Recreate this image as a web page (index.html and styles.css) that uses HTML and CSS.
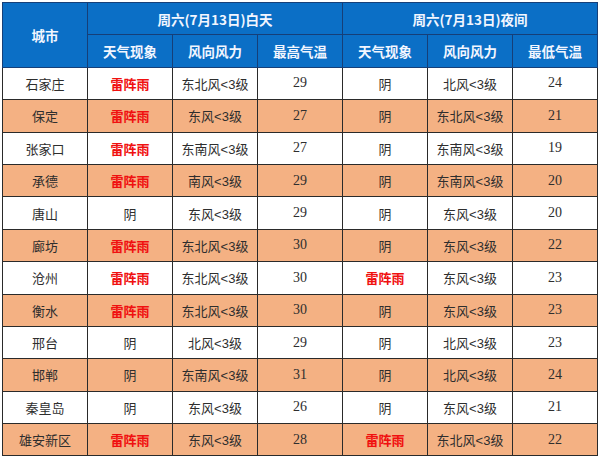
FILE: index.html
```html
<!DOCTYPE html>
<html lang="zh-CN">
<head>
<meta charset="utf-8">
<title>天气预报</title>
<link rel="stylesheet" href="styles.css">
</head>
<body>
<table class="wx">
  <colgroup>
    <col class="c1"><col class="c2"><col class="c3"><col class="c4"><col class="c5"><col class="c6"><col class="c7">
  </colgroup>
  <thead>
    <tr>
      <th rowspan="2">城市</th>
      <th colspan="3">周六(7月13日)白天</th>
      <th colspan="3">周六(7月13日)夜间</th>
    </tr>
    <tr>
      <th>天气现象</th><th>风向风力</th><th>最高气温</th>
      <th>天气现象</th><th>风向风力</th><th>最低气温</th>
    </tr>
  </thead>
  <tbody>
    <tr><td>石家庄</td><td class="red">雷阵雨</td><td>东北风&lt;3级</td><td class="num">29</td><td>阴</td><td>北风&lt;3级</td><td class="num">24</td></tr>
    <tr class="alt"><td>保定</td><td class="red">雷阵雨</td><td>东风&lt;3级</td><td class="num">27</td><td>阴</td><td>东北风&lt;3级</td><td class="num">21</td></tr>
    <tr><td>张家口</td><td class="red">雷阵雨</td><td>东南风&lt;3级</td><td class="num">27</td><td>阴</td><td>东南风&lt;3级</td><td class="num">19</td></tr>
    <tr class="alt"><td>承德</td><td class="red">雷阵雨</td><td>南风&lt;3级</td><td class="num">29</td><td>阴</td><td>东南风&lt;3级</td><td class="num">20</td></tr>
    <tr><td>唐山</td><td>阴</td><td>东风&lt;3级</td><td class="num">29</td><td>阴</td><td>东风&lt;3级</td><td class="num">20</td></tr>
    <tr class="alt"><td>廊坊</td><td class="red">雷阵雨</td><td>东北风&lt;3级</td><td class="num">30</td><td>阴</td><td>东风&lt;3级</td><td class="num">22</td></tr>
    <tr><td>沧州</td><td class="red">雷阵雨</td><td>东北风&lt;3级</td><td class="num">30</td><td class="red">雷阵雨</td><td>东风&lt;3级</td><td class="num">23</td></tr>
    <tr class="alt"><td>衡水</td><td class="red">雷阵雨</td><td>东北风&lt;3级</td><td class="num">30</td><td>阴</td><td>东风&lt;3级</td><td class="num">23</td></tr>
    <tr><td>邢台</td><td>阴</td><td>北风&lt;3级</td><td class="num">29</td><td>阴</td><td>北风&lt;3级</td><td class="num">23</td></tr>
    <tr class="alt"><td>邯郸</td><td>阴</td><td>东南风&lt;3级</td><td class="num">31</td><td>阴</td><td>北风&lt;3级</td><td class="num">24</td></tr>
    <tr><td>秦皇岛</td><td>阴</td><td>东风&lt;3级</td><td class="num">26</td><td>阴</td><td>东风&lt;3级</td><td class="num">21</td></tr>
    <tr class="alt"><td>雄安新区</td><td class="red">雷阵雨</td><td>东风&lt;3级</td><td class="num">28</td><td class="red">雷阵雨</td><td>东北风&lt;3级</td><td class="num">22</td></tr>
  </tbody>
</table>
</body>
</html>
```

FILE: styles.css
```css
html, body {
  margin: 0;
  padding: 0;
  background: #ffffff;
}
body {
  padding: 2px 0 0 2px;
}
.wx {
  border-collapse: collapse;
  table-layout: fixed;
  width: 596px;
  font-family: "Liberation Sans", "Noto Sans CJK SC", sans-serif;
  font-size: 13px;
  color: #2e2e2e;
}
.c1, .c2, .c3, .c4, .c5, .c6, .c7 { width: 85px; }
.wx th {
  background: #0b6fc6;
  color: #f2f6ff;
  font-family: "Noto Sans CJK SC", sans-serif;
  font-weight: bold;
  font-size: 13.5px;
  height: 31.4px;
  padding: 0;
  border: 1px solid #163f78;
  text-align: center;
  vertical-align: middle;
}
.wx td {
  height: 31.4px;
  padding: 0;
  border: 1px solid #2a2a2a;
  text-align: center;
  vertical-align: middle;
  background: #ffffff;
}
.wx td.num {
  font-family: "Liberation Serif", serif;
  font-size: 14px;
}
.wx tr.alt td {
  background: #f4b183;
}
.wx td.red {
  color: #f01010;
  font-weight: bold;
  font-family: "Noto Sans CJK SC", sans-serif;
}
```
